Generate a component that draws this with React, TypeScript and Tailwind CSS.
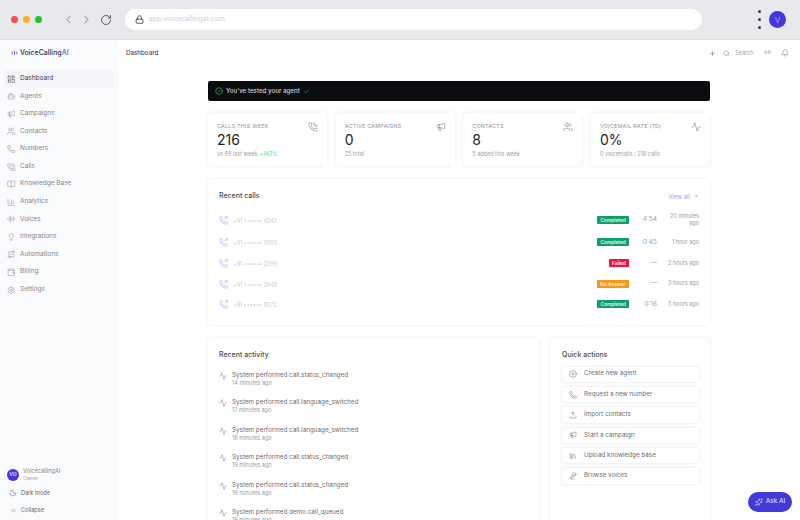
import {
  Activity, AudioLines, Bell, BookOpen, Bot, ChartColumn, Check, ChevronLeft, ChevronRight, ChevronsLeft,
  CircleCheck, CirclePlus, LayoutDashboard, Library, Lightbulb, Lock, Megaphone, MicVocal, Moon, Phone,
  PhoneCall, PhoneOutgoing, Plus, RotateCw, Route, Search, Settings, Sparkles, Upload, Users, Wallet, ArrowRight,
} from 'lucide-react';

const navItems = [
  { label: 'Dashboard', icon: LayoutDashboard, active: true },
  { label: 'Agents', icon: Bot },
  { label: 'Campaigns', icon: Megaphone },
  { label: 'Contacts', icon: Users },
  { label: 'Numbers', icon: Phone },
  { label: 'Calls', icon: PhoneCall },
  { label: 'Knowledge Base', icon: BookOpen },
  { label: 'Analytics', icon: ChartColumn },
  { label: 'Voices', icon: AudioLines },
  { label: 'Integrations', icon: Lightbulb },
  { label: 'Automations', icon: Route },
  { label: 'Billing', icon: Wallet },
  { label: 'Settings', icon: Settings },
];

const stats = [
  { label: 'CALLS THIS WEEK', value: '216', sub: 'vs 89 last week', delta: '+143%', icon: PhoneCall },
  { label: 'ACTIVE CAMPAIGNS', value: '0', sub: '25 total', icon: Megaphone },
  { label: 'CONTACTS', value: '8', sub: '5 added this week', icon: Users },
  { label: 'VOICEMAIL RATE (7D)', value: '0%', sub: '0 voicemails / 216 calls', icon: Activity },
];

const calls = [
  { num: '+91 •••••• 4247', status: 'Completed', color: 'bg-[#0f9d63]', dur: '4:54', when: '20 minutes ago', h: 'h-[23px]' },
  { num: '+91 •••••• 0895', status: 'Completed', color: 'bg-[#0f9d63]', dur: '0:45', when: '1 hour ago', h: 'h-[22px]' },
  { num: '+91 •••••• 2399', status: 'Failed', color: 'bg-[#e8173f]', dur: '—', when: '2 hours ago', h: 'h-[20px]' },
  { num: '+91 •••••• 3949', status: 'No Answer', color: 'bg-[#fb9517]', dur: '—', when: '3 hours ago', h: 'h-[21px]' },
  { num: '+91 •••••• 8272', status: 'Completed', color: 'bg-[#0f9d63]', dur: '0:16', when: '5 hours ago', h: 'h-[20px]' },
];

const activity = [
  { text: 'System performed call.status_changed', when: '14 minutes ago' },
  { text: 'System performed call.language_switched', when: '17 minutes ago' },
  { text: 'System performed call.language_switched', when: '18 minutes ago' },
  { text: 'System performed call.status_changed', when: '19 minutes ago' },
  { text: 'System performed call.status_changed', when: '19 minutes ago' },
  { text: 'System performed demo.call_queued', when: '19 minutes ago' },
];

const actions = [
  { label: 'Create new agent', icon: CirclePlus },
  { label: 'Request a new number', icon: Phone },
  { label: 'Import contacts', icon: Upload },
  { label: 'Start a campaign', icon: Megaphone },
  { label: 'Upload knowledge base', icon: Library },
  { label: 'Browse voices', icon: MicVocal },
];

export default function App() {
  return (
    <div className="relative h-[520px] w-[800px] overflow-hidden bg-white font-['Inter',sans-serif] text-[#27272a]">
      {/* browser chrome */}
      <div className="flex h-[40px] items-center border-b border-[#dfe0e4] bg-[#e8e9ec]">
        <div className="ml-[11px] flex gap-[5px]">
          <span className="h-[7px] w-[7px] rounded-full bg-[#fb4b4e]" />
          <span className="h-[7px] w-[7px] rounded-full bg-[#fdb022]" />
          <span className="h-[7px] w-[7px] rounded-full bg-[#22c32e]" />
        </div>
        <ChevronLeft size={13} strokeWidth={1.5} className="ml-[20px] text-[#6a6d73]" />
        <ChevronRight size={13} strokeWidth={1.5} className="ml-[5px] text-[#6a6d73]" />
        <RotateCw size={12} strokeWidth={1.7} className="ml-[7px] text-[#44474c]" />
        <div className="ml-[13px] flex h-[21px] w-[577px] items-center rounded-full bg-white pl-[10px]">
          <Lock size={9} strokeWidth={2.4} className="text-[#44474c]" />
          <span className="ml-[5px] text-[7px] text-[#cfd1d5]">app.voicecallingai.com</span>
        </div>
        <div className="ml-[56px] flex flex-col gap-[5px]">
          <span className="h-[3px] w-[3px] rounded-full bg-[#3b3d42]" />
          <span className="h-[3px] w-[3px] rounded-full bg-[#3b3d42]" />
          <span className="h-[3px] w-[3px] rounded-full bg-[#3b3d42]" />
        </div>
        <div className="ml-[8px] flex h-[17px] w-[17px] items-center justify-center rounded-full bg-[#4338e0] text-[8px] text-[#a5a0f5]">V</div>
      </div>

      <div className="flex h-[480px]">
        {/* sidebar */}
        <aside className="flex w-[118px] flex-col bg-[#fafbfd]">
          <div className="flex h-[26px] items-center pl-[11px]">
            <svg width="7" height="6" viewBox="0 0 7 6" className="mr-[2px]">
              <path d="M0 3 L2 1 L2 5 Z" fill="#a5a0f5" />
              <path d="M7 3 L5 1 L5 5 Z" fill="#a5a0f5" />
              <rect x="3" y="1" width="1" height="4" fill="#6d63e8" />
            </svg>
            <span className="text-[7px] font-medium text-[#33353a]">VoiceCalling<span className="text-[#6a60e0]">AI</span></span>
          </div>
          <nav className="mt-[4px] flex flex-col px-[4px]">
            {navItems.map((item) => (
              <div
                key={item.label}
                className={`flex h-[17.6px] items-center gap-[4.5px] rounded-[3px] pl-[3px] text-[6.5px] ${item.active ? 'bg-[#f3f5f9] text-[#3f4247]' : 'text-[#84868c]'}`}
              >
                <item.icon size={8.5} strokeWidth={1.4} className="shrink-0" />
                {item.label}
              </div>
            ))}
          </nav>
          <div className="mt-auto pb-[3px] pl-[7px]">
            <div className="flex items-center gap-[4px]">
              <div className="flex h-[12px] w-[12px] items-center justify-center rounded-full bg-[#4338e0] text-[5px] font-semibold text-white/80">VO</div>
              <div className="leading-none">
                <div className="text-[5.6px] text-[#84868c]">VoicecallingAI</div>
                <div className="mt-[2px] text-[4.8px] text-[#a4a6ab]">Owner</div>
              </div>
            </div>
            <div className="mt-[5px] flex h-[14px] items-center gap-[4px] pl-[2px] text-[5.6px] text-[#66686e]">
              <Moon size={8} strokeWidth={1.5} />
              Dark mode
            </div>
            <div className="mt-[3px] flex h-[14px] items-center gap-[4px] pl-[3px] text-[5.6px] text-[#66686e]">
              <ChevronsLeft size={7} strokeWidth={1.5} />
              Collapse
            </div>
          </div>
        </aside>

        {/* main */}
        <main className="min-w-0 flex-1">
          <header className="flex h-[25px] items-center pl-[8px] pr-[11px] pt-[1px] text-[6.2px] font-medium text-[#4a4c52]">
            Dashboard
            <div className="ml-auto flex items-center text-[#a4a6ab]">
              <Plus size={7} strokeWidth={1.7} className="text-[#66686e]" />
              <Search size={7} strokeWidth={1.5} className="ml-[7px] text-[#77797f]" />
              <span className="ml-[5.5px] text-[5.5px] font-normal">Search</span>
              <span className="ml-[10px] text-[4.5px]">⌘K</span>
              <Bell size={8} strokeWidth={1.5} className="ml-[10px] text-[#66686e]" />
            </div>
          </header>

          <div className="px-[90px] pt-[16px]">
            <div className="flex h-[20px] items-center rounded-[2px] bg-[#0b0c10] pl-[7px] text-[6.2px] font-medium text-[#d2d3d6]">
              <CircleCheck size={8} strokeWidth={2} className="text-[#22c55e]" />
              <span className="ml-[3px]">You've tested your agent</span>
              <Check size={7} strokeWidth={2} className="ml-[3px] text-[#22c55e]" />
            </div>

            <div className="mt-[12px] grid grid-cols-4 gap-[8.5px]">
              {stats.map((s) => (
                <div key={s.label} className="relative h-[53px] rounded-[4px] bg-white pl-[9px] pt-[10px] shadow-[0_0_4px_rgba(0,0,0,0.08)]">
                  <div className="text-[5.3px] leading-[7px] tracking-[0.3px] text-[#8d8f95]">{s.label}</div>
                  <div className="mt-[1px] text-[14px] leading-[17px] text-[#1d1e22]">{s.value}</div>
                  <div className="mt-[3px] text-[5.5px] leading-[7px] text-[#a0a2a8]">
                    {s.sub}
                    {s.delta && <span className="ml-[2px] text-[#4ade80]">{s.delta}</span>}
                  </div>
                  <s.icon size={10} strokeWidth={1.2} className="absolute right-[9px] top-[9px] text-[#66686e]" />
                </div>
              ))}
            </div>

            <section className="mt-[13px] h-[146px] rounded-[4px] bg-white px-[11px] pt-[12px] shadow-[0_0_4px_rgba(0,0,0,0.08)]">
              <div className="flex items-center justify-between">
                <h2 className="text-[7px] font-medium text-[#4a4c52]">Recent calls</h2>
                <span className="flex items-center gap-[3px] text-[6px] text-[#a5a0f5]">
                  View all <ArrowRight size={6} />
                </span>
              </div>
              <div className="mt-[7px] flex flex-col">
                {calls.map((c) => (
                  <div key={c.num} className={`flex ${c.h} items-center`}>
                    <PhoneOutgoing size={9} strokeWidth={1.5} className="text-[#a5a0f5]" />
                    <span className="ml-[5px] text-[6px] tracking-[-0.3px] text-[#cfd0d4] blur-[0.4px]">{c.num}</span>
                    <div className="ml-auto flex items-center">
                      <span className={`rounded-[1px] px-[3.2px] py-[1px] text-[4.8px] font-semibold leading-[6px] text-white/90 ${c.color}`}>{c.status}</span>
                      <span className="w-[28px] text-right text-[6.6px] text-[#a0a2a8]">{c.dur}</span>
                      <span className="w-[42px] pl-[9px] text-right text-[5.5px] leading-[7.5px] text-[#9a9ca2]">{c.when}</span>
                    </div>
                  </div>
                ))}
              </div>
            </section>

            <div className="mt-[13px] grid grid-cols-[331px_1fr] gap-[12px]">
              <section className="h-[200px] rounded-[4px] bg-white pl-[11px] pt-[12px] shadow-[0_0_4px_rgba(0,0,0,0.08)]">
                <h2 className="text-[7px] font-medium text-[#4a4c52]">Recent activity</h2>
                <div className="mt-[9px] flex flex-col gap-[8px]">
                  {activity.map((a, i) => (
                    <div key={i} className="flex h-[19.6px] gap-[5px]">
                      <Activity size={8} strokeWidth={1.3} className="mt-[2px] text-[#66686e]" />
                      <div>
                        <div className="text-[6.3px] leading-[10px] text-[#6a6c72]">{a.text}</div>
                        <div className="text-[5.6px] leading-[7px] text-[#9a9ca2]">{a.when}</div>
                      </div>
                    </div>
                  ))}
                </div>
              </section>

              <section className="h-[200px] rounded-[4px] bg-white pl-[11px] pr-[11px] pt-[12px] shadow-[0_0_4px_rgba(0,0,0,0.08)]">
                <h2 className="text-[7px] font-medium text-[#4a4c52]">Quick actions</h2>
                <div className="mt-[6px] flex flex-col gap-[5px]">
                  {actions.map((a) => (
                    <div key={a.label} className="flex h-[15.4px] items-center gap-[7px] rounded-[2px] bg-white pl-[7px] text-[6.3px] text-[#6a6c72] shadow-[0_0_3px_rgba(0,0,0,0.12)]">
                      <a.icon size={8} strokeWidth={1.3} className="text-[#55585e]" />
                      {a.label}
                    </div>
                  ))}
                </div>
              </section>
            </div>
          </div>
        </main>
      </div>

      <div className="absolute bottom-[8px] right-[8px] flex h-[20px] w-[44px] items-center justify-center gap-[3px] rounded-full bg-[#4338d8] text-[6.4px] font-medium text-[#dcdafb]">
        <Sparkles size={8} strokeWidth={1.7} />
        Ask AI
      </div>
    </div>
  );
}
